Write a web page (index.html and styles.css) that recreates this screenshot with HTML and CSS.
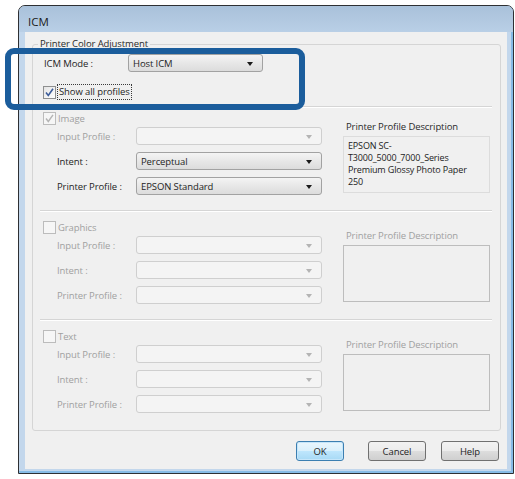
FILE: index.html
```html
<!DOCTYPE html>
<html>
<head>
<meta charset="utf-8">
<link rel="stylesheet" href="styles.css">
</head>
<body>
<div class="window">
  <div class="titlebar"><span class="title">ICM</span></div>
  <div class="client">
    <fieldset class="group">
      <legend>Printer Color Adjustment</legend>
      <div class="mode-row">
        <span class="mode-label">ICM Mode :</span>
        <div class="select mode-select"><span class="val">Host ICM</span><i class="arrow"></i></div>
      </div>
      <div class="check-row">
        <span class="cb"><svg width="11" height="11" viewBox="0 0 11 11"><path d="M2 5.5 L4.3 8.5 L9 1.8" fill="none" stroke="#3d5d9a" stroke-width="1.6"/></svg></span>
        <span class="focus">Show all profiles</span>
      </div>
      <div class="sep sep-top"></div>

      <div class="sec sec-image">
        <div class="sec-left">
          <div class="sec-head">
            <span class="cb cb-dis"><svg width="11" height="11" viewBox="0 0 11 11"><path d="M2 5.5 L4.3 8.5 L9 1.8" fill="none" stroke="#b4b4b4" stroke-width="1.4"/></svg></span>
            <span class="head-label dis-text">Image</span>
          </div>
          <div class="row"><span class="lbl dis-text">Input Profile :</span><div class="select select-dis"><i class="arrow"></i></div></div>
          <div class="row"><span class="lbl">Intent :</span><div class="select"><span class="val">Perceptual</span><i class="arrow"></i></div></div>
          <div class="row"><span class="lbl">Printer Profile :</span><div class="select"><span class="val">EPSON Standard</span><i class="arrow"></i></div></div>
        </div>
        <div class="sec-right">
          <div class="desc-label">Printer Profile Description</div>
          <div class="desc-box">EPSON SC-<br>T3000_5000_7000_Series<br>Premium Glossy Photo Paper<br>250</div>
        </div>
      </div>
      <div class="sep"></div>

      <div class="sec">
        <div class="sec-left">
          <div class="sec-head">
            <span class="cb cb-dis"></span>
            <span class="head-label dis-text">Graphics</span>
          </div>
          <div class="row"><span class="lbl dis-text">Input Profile :</span><div class="select select-dis"><i class="arrow"></i></div></div>
          <div class="row"><span class="lbl dis-text">Intent :</span><div class="select select-dis"><i class="arrow"></i></div></div>
          <div class="row"><span class="lbl dis-text">Printer Profile :</span><div class="select select-dis"><i class="arrow"></i></div></div>
        </div>
        <div class="sec-right">
          <div class="desc-label dis-text">Printer Profile Description</div>
          <div class="desc-box desc-dis"></div>
        </div>
      </div>
      <div class="sep"></div>

      <div class="sec">
        <div class="sec-left">
          <div class="sec-head">
            <span class="cb cb-dis"></span>
            <span class="head-label dis-text">Text</span>
          </div>
          <div class="row"><span class="lbl dis-text">Input Profile :</span><div class="select select-dis"><i class="arrow"></i></div></div>
          <div class="row"><span class="lbl dis-text">Intent :</span><div class="select select-dis"><i class="arrow"></i></div></div>
          <div class="row"><span class="lbl dis-text">Printer Profile :</span><div class="select select-dis"><i class="arrow"></i></div></div>
        </div>
        <div class="sec-right">
          <div class="desc-label dis-text">Printer Profile Description</div>
          <div class="desc-box desc-dis"></div>
        </div>
      </div>
    </fieldset>
    <div class="buttons">
      <button class="btn btn-ok">OK</button>
      <button class="btn btn-cancel">Cancel</button>
      <button class="btn btn-help">Help</button>
    </div>
  </div>
</div>
<div class="highlight"></div>
</body>
</html>
```
FILE: styles.css
```css
html, body {
  margin: 0;
  padding: 0;
}
body {
  width: 515px;
  height: 479px;
  background: #ffffff;
  font-family: "Open Sans", "Noto Sans", sans-serif;
  font-size: 9.5px;
  letter-spacing: -0.1px;
  color: #1e1e1e;
  position: relative;
  overflow: hidden;
}
.window {
  margin: 5px 0 0 18px;
  width: 496px;
  height: 469px;
  box-sizing: border-box;
  border: 1px solid #2e3033;
  border-radius: 7px 7px 0 0;
  background: #c3d7ec;
  box-shadow: inset -2px -2px 0 #86bbe6;
  display: flex;
  flex-direction: column;
}
.titlebar {
  height: 26px;
  flex: none;
  box-sizing: border-box;
  padding: 5px 0 0 9px;
  background: linear-gradient(#a9c1da, #b9cfe6);
  border-radius: 6px 6px 0 0;
  display: flex;
  align-items: center;
}
.title {
  font-size: 11.5px;
  letter-spacing: 0;
  color: #1b1b1b;
}
.client {
  flex: 1;
  margin: 0 6px 4px 6px;
  background: #f0f0f0;
  display: flex;
  flex-direction: column;
}
.group {
  margin: 5px 6px 0 7px;
  padding: 0 0 17px 0;
  border: 1px solid #d5d5d5;
  border-radius: 3px;
  min-width: 0;
}
.group legend {
  margin-left: 5px;
  padding: 0 2px;
  line-height: 14px;
  color: #2a2a2a;
}
.mode-row {
  display: flex;
  align-items: center;
  padding-left: 11px;
  margin-top: 3px;
}
.mode-label {
  width: 84px;
}
.select {
  box-sizing: border-box;
  height: 18px;
  width: 186px;
  border: 1px solid #a2a2a2;
  border-radius: 3px;
  background: linear-gradient(#f4f4f4, #e6e6e6 55%, #dcdcdc);
  display: flex;
  align-items: center;
  position: relative;
}
.mode-select {
  width: 135px;
}
.val {
  padding-left: 4px;
  flex: 1;
  white-space: nowrap;
}
.arrow {
  position: absolute;
  right: 9px;
  top: 7px;
  width: 0;
  height: 0;
  border-left: 3.5px solid transparent;
  border-right: 3.5px solid transparent;
  border-top: 4px solid #1a1a1a;
}
.select-dis {
  border-color: #cfcfcf;
  background: #f4f4f4;
}
.select-dis .arrow {
  border-top-color: #b4b4b4;
}
.check-row {
  display: flex;
  align-items: center;
  height: 16px;
  margin-top: 12px;
  padding-left: 10px;
}
.cb {
  box-sizing: border-box;
  width: 13px;
  height: 13px;
  border: 1px solid #8e8f8f;
  background: linear-gradient(135deg, #e4e4e4, #ffffff);
  display: flex;
  align-items: center;
  justify-content: center;
  flex: none;
}
.cb-dis {
  border-color: #bcbcbc;
  background: #f6f6f6;
}
.focus {
  margin-left: 1px;
  padding: 0 1px;
  line-height: 14px;
  border: 1px dotted #3a3a3a;
}
.sep {
  height: 1px;
  border-top: 1px solid #d5d5d5;
  background: #ffffff;
  margin: 15px 8px 0 7px;
}
.sep-top {
  margin-top: 6px;
}
.sec {
  display: flex;
  padding-left: 10px;
  margin-top: 9px;
}
.sec-image {
  margin-top: 4px;
}
.sec-left {
  width: 279px;
  display: flex;
  flex-direction: column;
}
.sec-head {
  display: flex;
  align-items: center;
  height: 13px;
}
.head-label {
  margin-left: 2px;
}
.row {
  display: flex;
  align-items: center;
  padding-left: 14px;
  margin-top: 7px;
}
.sec-head + .row {
  margin-top: 2px;
}
.lbl {
  width: 79px;
  white-space: nowrap;
}
.dis-text {
  color: #a0a0a0;
}
.sec-right {
  margin-left: 21px;
  width: 147px;
  padding-top: 8px;
}
.desc-label {
  line-height: 14px;
  padding-left: 3px;
  color: #2a2a2a;
}
.desc-label.dis-text {
  color: #a0a0a0;
}
.desc-box {
  box-sizing: border-box;
  margin-top: 2px;
  height: 57px;
  border: 1px solid #dcdcdc;
  padding: 3px 4px 0 4px;
  font-size: 9px;
  letter-spacing: -0.15px;
  line-height: 12px;
  color: #222;
  white-space: nowrap;
}
.desc-dis {
  border-color: #bdbdbd;
}
.buttons {
  display: flex;
  justify-content: flex-end;
  margin-top: 10px;
  padding-right: 8px;
}
.btn {
  box-sizing: border-box;
  height: 20px;
  padding: 0;
  font-family: inherit;
  font-size: 9.5px;
  letter-spacing: -0.1px;
  color: #1e1e1e;
  border: 1px solid #707070;
  border-radius: 3px;
  background: linear-gradient(#f2f2f2, #ebebeb 50%, #dddddd 51%, #cfcfcf);
}
.btn-ok {
  width: 48px;
  border-color: #3c7fb1;
  background: linear-gradient(#eaf6fd, #d9f0fc 50%, #bee6fd 51%, #a7d9f5);
  box-shadow: inset 0 0 0 1px #c6e6fa;
}
.btn-cancel {
  width: 58px;
  margin-left: 24px;
}
.btn-help {
  width: 58px;
  margin-left: 15px;
}
.highlight {
  position: absolute;
  left: 5px;
  top: 48px;
  width: 300px;
  height: 62px;
  box-sizing: border-box;
  border: 6px solid #1b5d9c;
  border-radius: 9px;
}
```
